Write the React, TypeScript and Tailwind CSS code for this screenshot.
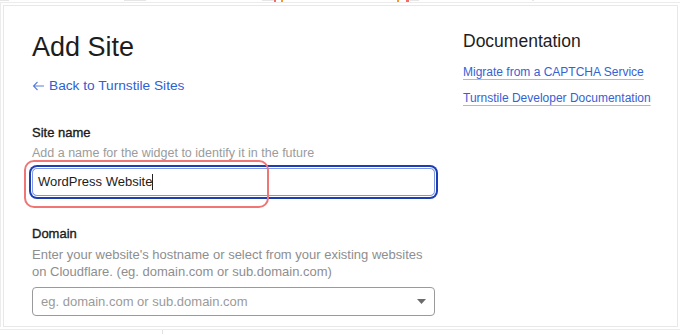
import React from "react";

export default function App() {
  const font = { fontFamily: "'Liberation Sans', Arial, sans-serif" };
  return (
    <div className="w-[680px] h-[334px] bg-white overflow-hidden relative" style={font}>
      {/* top remnant strip */}
      <div className="h-[2px] relative">
        <div className="absolute left-0 top-0 w-[9px] h-[1px] bg-[#e6e6e6]" />
        <div className="absolute left-[124px] top-0 w-[22px] h-[1px] bg-[#e6e6e6]" />
        <div className="absolute left-[262px] top-0 w-[12px] h-[1px] bg-[#e6e6e6]" />
        <div className="absolute left-[274px] top-0 w-[2px] h-[2px] bg-[#f46a6a]" />
        <div className="absolute left-[281px] top-0 w-[2px] h-[2px] bg-[#f59a23]" />
        <div className="absolute left-[397px] top-0 w-[2px] h-[2px] bg-[#f59a23]" />
        <div className="absolute left-[406px] top-0 w-[3px] h-[2px] bg-[#f46a6a]" />
        <div className="absolute left-[410px] top-0 w-[9px] h-[1px] bg-[#e6e6e6]" />
        <div className="absolute left-[532px] top-0 w-[2px] h-[1px] bg-[#e6e6e6]" />
      </div>
      <div className="border-t border-l border-[#ececec] pt-[2px] pl-[2px] pr-[2px]">
        <div className="border border-[#e8e8e8] h-[322px] flex pl-[28px] relative">
          {/* left column */}
          <div className="w-[403px] flex flex-col">
            <h1 className="text-[27px] leading-[32px] text-[#1d1d1d] font-normal mt-[25px]">Add Site</h1>
            <a className="mt-[13px] text-[13.7px] leading-[20px] text-[#2e5fd3] flex items-center gap-[4px]">
              <svg width="13" height="10" viewBox="0 0 13 10" fill="none" stroke="#5a7fd9" strokeWidth="1.1">
                <path d="M12 5H1.5M5.5 1L1.5 5L5.5 9" />
              </svg>
              <span>Back to Turnstile Sites</span>
            </a>
            <div className="mt-[28px] text-[13px] leading-[18px] text-[#1a1a1a] [-webkit-text-stroke:0.35px_#1a1a1a]">Site name</div>
            <div className="mt-[2px] text-[12.5px] leading-[18px] text-[#9b9b9b]">Add a name for the widget to identify it in the future</div>
            <div className="mt-[6px] h-[28px] rounded-[5px] border border-[#8097e0] ring-2 ring-[#1c3db3] ring-offset-1 flex items-center pl-[5px] text-[13px] text-[#1d1d1d]">
              <span>WordPress Website</span>
              <span className="inline-block w-[1px] h-[16px] bg-[#222]" />
            </div>
            <div className="mt-[29px] text-[13px] leading-[18px] text-[#1a1a1a] [-webkit-text-stroke:0.35px_#1a1a1a]">Domain</div>
            <div className="mt-[3px] text-[13px] leading-[17px] text-[#8e8e8e]">
              Enter your website's hostname or select from your existing websites on Cloudflare. (eg. domain.com or sub.domain.com)
            </div>
            <div className="mt-[7px] h-[29px] rounded-[4px] border border-[#9a9a9a] flex items-center justify-between pl-[8px] pr-[8px] text-[13px] text-[#9a9a9a]">
              <span>eg. domain.com or sub.domain.com</span>
              <svg width="9" height="5" viewBox="0 0 9 5"><path d="M0 0H9L4.5 5Z" fill="#6b6b6b" /></svg>
            </div>
          </div>
          {/* right column */}
          <div className="ml-[28px] flex flex-col whitespace-nowrap">
            <h2 className="mt-[24px] text-[17.5px] leading-[22px] text-[#1d1d1d] font-normal">Documentation</h2>
            <a className="mt-[11px] text-[12px] leading-[18px] text-[#3462d3] underline decoration-[#a9b8ec] underline-offset-[3px]">Migrate from a CAPTCHA Service</a>
            <a className="mt-[8px] text-[12px] leading-[18px] text-[#3462d3] underline decoration-[#a9b8ec] underline-offset-[3px]">Turnstile Developer Documentation</a>
          </div>
          {/* annotation */}
          <div className="absolute left-[20px] top-[154px] w-[245px] h-[48px] rounded-[10px] border-2 border-[#f07575]" />
        </div>
      </div>
      <div className="mt-[2px] border-t border-[#ececec] h-[6px] flex">
        <div className="w-[163px] border-r border-[#e2e2e2]" />
      </div>
    </div>
  );
}
